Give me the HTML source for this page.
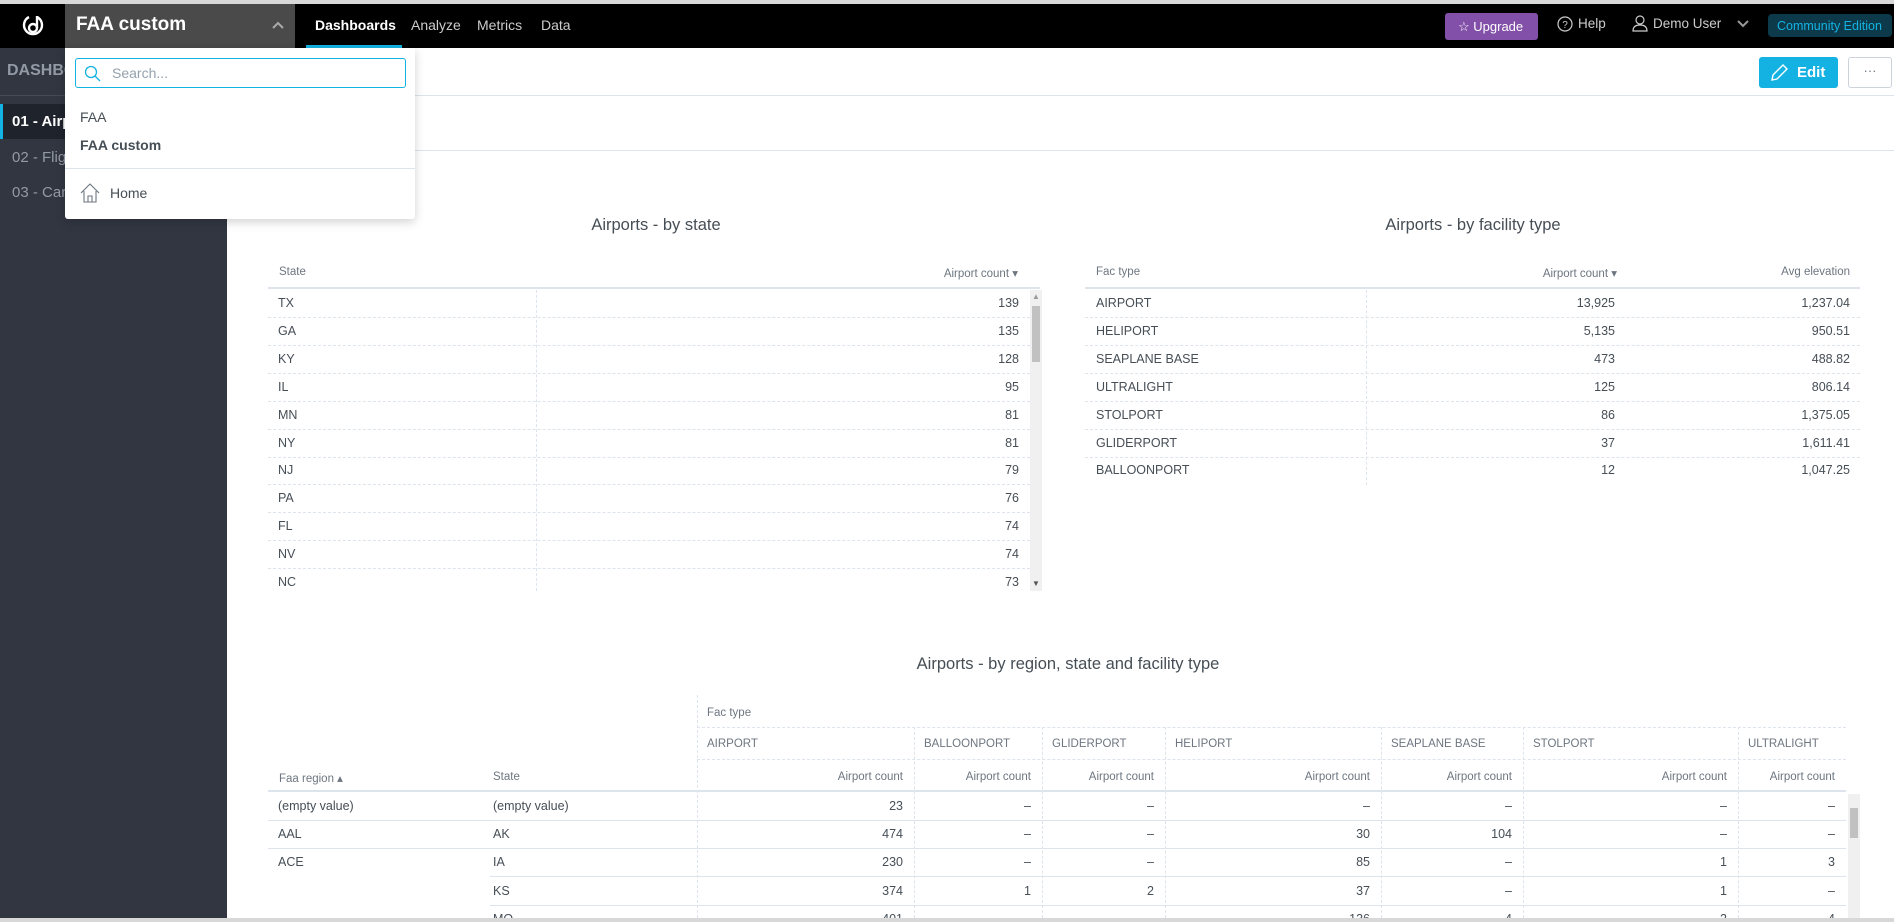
<!DOCTYPE html>
<html><head><meta charset="utf-8"><style>
*{margin:0;padding:0;box-sizing:border-box}
body{width:1894px;height:922px;overflow:hidden;position:relative;font-family:"Liberation Sans",sans-serif;background:#fff;color:#464e56}
.a{position:absolute;white-space:nowrap}
.top{position:absolute;left:0;top:0;width:1894px;height:4px;background:#d8d8d8}
.bar{position:absolute;left:0;top:4px;width:1894px;height:44px;background:#000}
.side{position:absolute;left:0;top:48px;width:227px;height:874px;background:#313641}
.t{font-size:12.5px;color:#464e56}
.r{text-align:right}
.hl{position:absolute;height:0;border-top:1px dashed #dde4eb}
.vl{position:absolute;width:0;border-left:1px dashed #dde4eb}
.sl{position:absolute;height:2px;background:#dde4eb}
.h{font-size:11.5px;color:#6d7680}
#clip{position:absolute;left:0;top:0;width:1894px;height:918px;overflow:hidden}
</style></head><body>
<div id="clip">
<div class="top"></div>
<div class="bar"></div>
<svg class="a" style="left:20px;top:13px" width="26" height="26" viewBox="0 0 26 26"><path d="M9 4 A9 9 0 1 0 17 4" fill="none" stroke="#fff" stroke-width="2.4"/><circle cx="13" cy="15" r="4" fill="none" stroke="#fff" stroke-width="2.4"/><path d="M17 15 V3" stroke="#fff" stroke-width="2.4"/></svg>
<div class="a" style="left:65px;top:4px;width:230px;height:44px;background:#4a4a4a"></div>
<div class="a" style="left:76px;top:14px;font-size:19px;font-weight:bold;color:#fff">FAA custom</div>
<svg class="a" style="left:272px;top:21px" width="12" height="8"><path d="M1 7 L6 2 L11 7" fill="none" stroke="#aaa" stroke-width="2"/></svg>
<div class="a" style="left:315px;top:17px;font-size:14px;font-weight:bold;color:#fff">Dashboards</div>
<div class="a" style="left:306px;top:45px;width:96px;height:3px;background:#14b2e2"></div>
<div class="a" style="left:411px;top:17px;font-size:14px;color:#ccc">Analyze</div>
<div class="a" style="left:477px;top:17px;font-size:14px;color:#ccc">Metrics</div>
<div class="a" style="left:541px;top:17px;font-size:14px;color:#ccc">Data</div>
<div class="a" style="left:1445px;top:13px;width:93px;height:27px;background:#8250a8;border-radius:3px"></div>
<div class="a" style="left:1458px;top:19px;font-size:13px;color:#fff">☆ Upgrade</div>
<svg class="a" style="left:1557px;top:16px" width="16" height="16"><circle cx="8" cy="8" r="7" fill="none" stroke="#ccc" stroke-width="1.2"/><text x="8" y="12" font-size="10" fill="#ccc" text-anchor="middle" font-family="Liberation Sans">?</text></svg>
<div class="a" style="left:1578px;top:16px;font-size:13.5px;color:#ccc">Help</div>
<svg class="a" style="left:1632px;top:14px" width="16" height="18"><circle cx="8" cy="6" r="4" fill="none" stroke="#ccc" stroke-width="1.2"/><path d="M1 17 Q1 11 8 11 Q15 11 15 17 Z" fill="none" stroke="#ccc" stroke-width="1.2"/></svg>
<div class="a" style="left:1653px;top:16px;font-size:13.5px;color:#ccc">Demo User</div>
<svg class="a" style="left:1737px;top:20px" width="12" height="8"><path d="M1 1 L6 6 L11 1" fill="none" stroke="#999" stroke-width="2"/></svg>
<div class="a" style="left:1768px;top:14px;width:124px;height:23px;background:#0d3a4a;border-radius:4px"></div>
<div class="a" style="left:1777px;top:19px;font-size:12.5px;color:#14b2e2">Community Edition</div>
<div class="side"></div>
<div class="a" style="left:7px;top:62px;font-size:16px;font-weight:bold;color:#939aa6">DASHBOARDS</div>
<div class="a" style="left:0;top:95px;width:227px;height:1px;background:#444a56"></div>
<div class="a" style="left:0;top:104px;width:227px;height:35px;background:#1f232b;border-left:3px solid #14b2e2"></div>
<div class="a" style="left:12px;top:113px;font-size:15px;font-weight:bold;color:#fff">01 - Airports</div>
<div class="a" style="left:12px;top:149px;font-size:15px;color:#939aa6">02 - Flights</div>
<div class="a" style="left:12px;top:184px;font-size:15px;color:#939aa6">03 - Carriers</div>
<div class="a" style="left:227px;top:95px;width:1667px;height:1px;background:#dde4eb"></div>
<div class="a" style="left:227px;top:150px;width:1667px;height:1px;background:#dde4eb"></div>
<div class="a" style="left:1759px;top:57px;width:79px;height:31px;background:#14b2e2;border-radius:3px"></div>
<svg class="a" style="left:1769px;top:63px" width="20" height="20"><path d="M3 17 L4 12 L14 2 L18 6 L8 16 Z" fill="none" stroke="#fff" stroke-width="1.4"/></svg>
<div class="a" style="left:1797px;top:64px;font-size:15px;font-weight:bold;color:#fff">Edit</div>
<div class="a" style="left:1848px;top:57px;width:44px;height:31px;border:1px solid #ccd3da;border-radius:3px;background:#fff;text-align:center;font-size:13px;line-height:26px;color:#6d7680">···</div>
<div class="a" style="left:65px;top:48px;width:350px;height:171px;background:#fff;box-shadow:0 3px 10px rgba(0,0,0,.18);border-radius:0 0 3px 3px"></div>
<div class="a" style="left:75px;top:58px;width:331px;height:30px;border:1px solid #14b2e2;border-radius:3px"></div>
<svg class="a" style="left:84px;top:65px" width="18" height="18"><circle cx="7" cy="7" r="5.5" fill="none" stroke="#14b2e2" stroke-width="1.3"/><path d="M11 11 L16 16" stroke="#14b2e2" stroke-width="1.3"/></svg>
<div class="a" style="left:112px;top:65px;font-size:14px;color:#94a1ad">Search...</div>
<div class="a" style="left:80px;top:109px;font-size:14px;color:#464e56">FAA</div>
<div class="a" style="left:80px;top:137px;font-size:14px;font-weight:bold;color:#464e56">FAA custom</div>
<div class="a" style="left:65px;top:168px;width:350px;height:1px;background:#dde4eb"></div>
<svg class="a" style="left:80px;top:183px" width="20" height="20"><path d="M1 10 L10 1 L19 10 M4 8 V19 H16 V8 M8 19 V13 H12 V19" fill="none" stroke="#6d7680" stroke-width="1.1"/></svg>
<div class="a" style="left:110px;top:185px;font-size:14px;color:#464e56">Home</div>

<div class="a" style="left:456px;top:216px;width:400px;text-align:center;font-size:16.5px;color:#464e56">Airports - by state</div>
<div class="a h" style="left:279px;top:266px">State</div>
<div class="a h r" style="left:850px;width:168px;top:266px">Airport count ▾</div>
<div class="sl" style="left:268px;top:287px;width:772px"></div>
<div class="vl" style="left:536px;top:290px;height:301px"></div>
<div class="a" style="left:1030px;top:290px;width:12px;height:301px;background:#f0f0f0"></div>
<div class="a" style="left:1032px;top:306px;width:8px;height:56px;background:#c1c1c1"></div>
<div class="a" style="left:1032px;top:292px;font-size:8px;color:#999">▲</div>
<div class="a" style="left:1032px;top:579px;font-size:8px;color:#555">▼</div>

<div class="a" style="left:1273px;top:216px;width:400px;text-align:center;font-size:16.5px;color:#464e56">Airports - by facility type</div>
<div class="a h" style="left:1096px;top:266px">Fac type</div>
<div class="a h r" style="left:1450px;width:167px;top:266px">Airport count ▾</div>
<div class="a h r" style="left:1700px;width:150px;top:266px">Avg elevation</div>
<div class="sl" style="left:1085px;top:287px;width:775px"></div>
<div class="vl" style="left:1366px;top:290px;height:195px"></div>

<div class="a" style="left:818px;top:655px;width:500px;text-align:center;font-size:16.5px;color:#464e56">Airports - by region, state and facility type</div>
<div id="t3"></div>
</div>
<div class="a" style="left:0;top:918px;width:1894px;height:4px;background:#d8d8d8"></div>

<script>
var C=document.getElementById('clip');
function row(html){C.insertAdjacentHTML('beforeend',html)}
var s=[["TX",139],["GA",135],["KY",128],["IL",95],["MN",81],["NY",81],["NJ",79],["PA",76],["FL",74],["NV",74],["NC",73]];
s.forEach(function(r,i){var y=296+i*27.9;
row('<div class="a t" style="left:278px;top:'+y+'px">'+r[0]+'</div><div class="a t r" style="left:900px;width:119px;top:'+y+'px">'+r[1]+'</div>');
if(i<10)row('<div class="hl" style="left:268px;top:'+(y+21)+'px;width:762px"></div>');});
var f=[["AIRPORT","13,925","1,237.04"],["HELIPORT","5,135","950.51"],["SEAPLANE BASE","473","488.82"],["ULTRALIGHT","125","806.14"],["STOLPORT","86","1,375.05"],["GLIDERPORT","37","1,611.41"],["BALLOONPORT","12","1,047.25"]];
f.forEach(function(r,i){var y=296+i*27.9;
row('<div class="a t" style="left:1096px;top:'+y+'px">'+r[0]+'</div><div class="a t r" style="left:1480px;width:135px;top:'+y+'px">'+r[1]+'</div><div class="a t r" style="left:1700px;width:150px;top:'+y+'px">'+r[2]+'</div>');
if(i<6)row('<div class="hl" style="left:1085px;top:'+(y+21)+'px;width:775px"></div>');});
var cb=[697,914,1042,1165,1381,1523,1738,1846];
var names=["AIRPORT","BALLOONPORT","GLIDERPORT","HELIPORT","SEAPLANE BASE","STOLPORT","ULTRALIGHT"];
row('<div class="a h" style="left:707px;top:707px">Fac type</div>');
row('<div class="hl" style="left:697px;top:727px;width:1149px"></div><div class="hl" style="left:697px;top:759px;width:1149px"></div>');
for(var i=0;i<7;i++){row('<div class="a h" style="left:'+(cb[i]+10)+'px;top:738px">'+names[i]+'</div><div class="a h r" style="left:'+cb[i]+'px;width:'+(cb[i+1]-cb[i]-11)+'px;top:771px">Airport count</div>');}
for(var i=0;i<7;i++)row('<div class="vl" style="left:'+cb[i]+'px;top:'+(i==0?695:727)+'px;height:'+(i==0?223:191)+'px"></div>');
row('<div class="a h" style="left:279px;top:771px">Faa region ▴</div><div class="a h" style="left:493px;top:771px">State</div>');
row('<div class="sl" style="left:268px;top:790px;width:1578px"></div>');
row('<div class="a" style="left:1848px;top:794px;width:12px;height:124px;background:#f0f0f0"></div><div class="a" style="left:1850px;top:808px;width:8px;height:30px;background:#c1c1c1"></div>');
var d=[["(empty value)","(empty value)",["23","–","–","–","–","–","–"]],["AAL","AK",["474","–","–","30","104","–","–"]],["ACE","IA",["230","–","–","85","–","1","3"]],["","KS",["374","1","2","37","–","1","–"]],["","MO",["401","–","–","136","4","2","4"]]];
d.forEach(function(r,k){var y=799+k*28.2;
row('<div class="a t" style="left:278px;top:'+y+'px">'+r[0]+'</div><div class="a t" style="left:493px;top:'+y+'px">'+r[1]+'</div>');
for(var i=0;i<7;i++)row('<div class="a t r" style="left:'+cb[i]+'px;width:'+(cb[i+1]-cb[i]-11)+'px;top:'+y+'px">'+r[2][i]+'</div>');
var lx=(k>=2)?490:268;row('<div class="sl" style="height:1px;left:'+lx+'px;top:'+(y+21)+'px;width:'+(1846-lx)+'px"></div>');});
</script>
</body></html>
